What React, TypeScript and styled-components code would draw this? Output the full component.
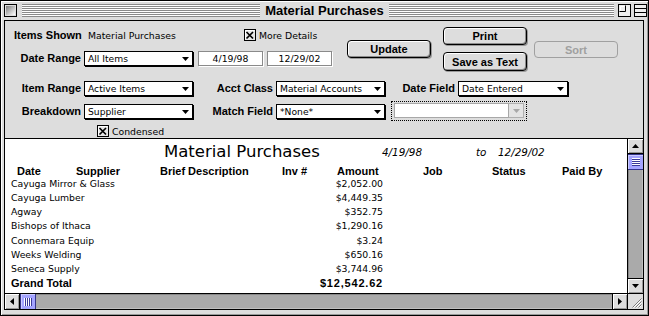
import React from "react";
import styled, { createGlobalStyle } from "styled-components";

const chicago = `"Liberation Sans", Arial, sans-serif`;
const geneva = `"DejaVu Sans", Verdana, sans-serif`;

const GlobalStyle = createGlobalStyle`
  html, body {
    margin: 0;
    padding: 0;
    background: #ffffff;
  }
  body {
    font-family: ${geneva};
    color: #000;
  }
`;

const Window = styled.div`
  box-sizing: border-box;
  width: 649px;
  height: 316px;
  border: 1px solid #000;
  background: #dddddd;
  padding: 0 4px 5px 3px;
  display: flex;
  flex-direction: column;
  box-shadow: inset 1px 1px 0 #ffffff, inset -1px -1px 0 #999999;
`;

const TitleBar = styled.div`
  height: 19px;
  margin: 0 -4px 0 -3px;
  display: grid;
  grid-template-columns: 1fr auto 1fr;
  align-items: center;
  flex-shrink: 0;
`;

const TitleSide = styled.div`
  display: flex;
  align-items: center;
  height: 100%;
`;

const Stripes = styled.div<{ $ml?: number; $mr?: number }>`
  flex: 1;
  height: 13px;
  margin-left: ${p => p.$ml ?? 0}px;
  margin-right: ${p => p.$mr ?? 0}px;
  background: repeating-linear-gradient(
    to bottom,
    #8a8a8a 0px,
    #8a8a8a 1px,
    #ffffff 1px,
    #ffffff 2px
  );
`;

const Title = styled.div`
  padding: 0 5px;
  font: bold 13px ${chicago};
  line-height: 19px;
  white-space: nowrap;
`;

const BoxIcon = styled.svg<{ $ml?: number; $mr?: number }>`
  display: block;
  flex-shrink: 0;
  margin-left: ${p => p.$ml ?? 0}px;
  margin-right: ${p => p.$mr ?? 0}px;
`;

const Inner = styled.div`
  flex: 1;
  min-height: 0;
  border: 1px solid #000;
  display: flex;
  flex-direction: column;
`;

const Panel = styled.div`
  height: 117px;
  box-sizing: border-box;
  padding-top: 6px;
  background: #dddddd;
  display: flex;
  flex-direction: column;
  flex-shrink: 0;
`;

const TopSection = styled.div`
  display: flex;
  align-items: flex-start;
  height: 45px;
`;

const LeftForm = styled.div`
  width: 327px;
  display: flex;
  flex-direction: column;
`;

const Row = styled.div<{ $mt?: number; $h?: number }>`
  display: flex;
  align-items: center;
  height: ${p => p.$h ?? 15}px;
  margin-top: ${p => p.$mt ?? 0}px;
`;

const ItemsLabel = styled.span`
  width: 83px;
  box-sizing: border-box;
  padding-left: 9px;
  font: bold 11px ${chicago};
  white-space: nowrap;
`;

const PlainText = styled.span<{ $w?: number }>`
  width: ${p => (p.$w ? `${p.$w}px` : "auto")};
  font-size: 9.3px;
  font-family: ${geneva};
  white-space: nowrap;
  flex-shrink: 0;
`;

const FieldLabel = styled.span<{ $w: number }>`
  width: ${p => p.$w}px;
  box-sizing: border-box;
  padding-right: 3px;
  text-align: right;
  font: bold 11px ${chicago};
  line-height: 15px;
  white-space: nowrap;
  flex-shrink: 0;
`;

const PopupBox = styled.div<{ $w: number }>`
  width: ${p => p.$w}px;
  height: 15px;
  box-sizing: border-box;
  border: 1px solid #000;
  background: #ffffff;
  box-shadow: 1px 1px 0 #000;
  display: flex;
  align-items: center;
  justify-content: space-between;
  padding: 0 3px 0 3px;
  flex-shrink: 0;
  font-size: 9.2px;
  font-family: ${geneva};
  white-space: nowrap;
`;

const DateField = styled.div<{ $ml: number }>`
  width: 65px;
  height: 15px;
  box-sizing: border-box;
  margin-left: ${p => p.$ml}px;
  border: 1px solid #8a8a8a;
  box-shadow: 1px 1px 0 #ffffff;
  background: #ffffff;
  font-size: 9.3px;
  line-height: 13px;
  text-align: center;
`;

const CheckWrap = styled.label<{ $ml?: number }>`
  display: flex;
  align-items: center;
  gap: 3px;
  margin-left: ${p => p.$ml ?? 0}px;
  font-size: 9.3px;
  font-family: ${geneva};
  white-space: nowrap;
`;

const PushButton = styled.div<{ $ml?: number; $mt?: number; $h?: number; $disabled?: boolean }>`
  width: 84px;
  height: ${p => p.$h ?? 18}px;
  box-sizing: border-box;
  margin-left: ${p => p.$ml ?? 0}px;
  margin-top: ${p => p.$mt ?? 0}px;
  border: 1px solid ${p => (p.$disabled ? "#a0a0a0" : "#000")};
  border-radius: 4px;
  background: #dddddd;
  box-shadow: ${p =>
    p.$disabled ? "none" : "inset 1px 1px 0 #ffffff, inset -1px -1px 0 #8c8c8c, 1px 1px 0 #999"};
  color: ${p => (p.$disabled ? "#a0a0a0" : "#000")};
  font: bold 11px ${chicago};
  display: flex;
  align-items: center;
  justify-content: center;
  flex-shrink: 0;
`;

const ButtonColumn = styled.div`
  display: flex;
  flex-direction: column;
  gap: 7px;
  margin-left: 12px;
`;

const ComboFocus = styled.div`
  margin-left: 6px;
  display: flex;
  padding: 1px 2px 2px 2px;
  border: 1px dotted #000;
  margin-top: -1px;
`;

const ComboField = styled.div`
  width: 115px;
  height: 15px;
  box-sizing: border-box;
  border: 1px solid #a8a8a8;
  background: #ffffff;
`;

const ComboArrow = styled.div`
  width: 15px;
  height: 15px;
  box-sizing: border-box;
  border: 1px solid #b0b0b0;
  border-left: none;
  background: #e4e4e4;
  display: flex;
  align-items: center;
  justify-content: center;
`;

const ReportRow = styled.div`
  flex: 1;
  min-height: 0;
  display: flex;
  border-top: 1px solid #000;
  border-bottom: 1px solid #000;
`;

const Report = styled.div`
  flex: 1;
  background: #ffffff;
  padding-top: 4px;
  overflow: hidden;
  display: flex;
  flex-direction: column;
`;

const ReportTitleRow = styled.div`
  display: flex;
  height: 18px;
  align-items: flex-start;
`;

const ReportTitle = styled.div`
  width: 377px;
  box-sizing: border-box;
  padding-left: 159px;
  font-size: 16.5px;
  font-family: ${geneva};
  line-height: 18px;
  white-space: nowrap;
`;

const ItalicCell = styled.div<{ $w?: number }>`
  width: ${p => (p.$w ? `${p.$w}px` : "auto")};
  padding-top: 2px;
  font-size: 10.4px;
  font-style: italic;
  font-family: ${geneva};
  line-height: 14px;
  white-space: nowrap;
`;

const HeaderRow = styled.div`
  display: grid;
  grid-template-columns: 12px 59px 84px 122px 55px 86px 69px 70px 1fr;
  height: 14px;
  margin-top: 3px;
  font: bold 11px ${chicago};
  line-height: 14px;
  white-space: nowrap;
`;

const DataRow = styled.div<{ $bold?: boolean }>`
  display: flex;
  height: 14.15px;
  line-height: 14px;
  font: ${p => (p.$bold ? `bold 11px ${chicago}` : `9.3px ${geneva}`)};
  white-space: nowrap;
  flex-shrink: 0;
`;

const NameCell = styled.div`
  width: 300px;
  padding-left: 6px;
  box-sizing: border-box;
`;

const AmountCell = styled.div<{ $spaced?: boolean }>`
  width: 78px;
  text-align: right;
  letter-spacing: ${p => (p.$spaced ? "0.8px" : "0")};
`;

const VScroll = styled.div`
  width: 15px;
  border-left: 1px solid #000;
  display: flex;
  flex-direction: column;
  flex-shrink: 0;
`;

const HScrollRow = styled.div`
  height: 15px;
  display: flex;
  flex-shrink: 0;
`;

const HScroll = styled.div`
  flex: 1;
  display: flex;
`;

const ArrowBox = styled.div<{ $edge: "top" | "bottom" | "left" | "right" }>`
  width: 15px;
  height: 15px;
  box-sizing: border-box;
  background: #dddddd;
  border-${p => p.$edge}: 1px solid #000;
  box-shadow: inset 1px 1px 0 #ffffff, inset -1px -1px 0 #999999;
  display: flex;
  align-items: center;
  justify-content: center;
  flex-shrink: 0;
`;

const Track = styled.div<{ $vertical?: boolean }>`
  flex: 1;
  background: #aaaaaa;
  box-shadow: ${p =>
    p.$vertical
      ? "inset 1px 0 0 #888888, inset -1px 0 0 #c0c0c0"
      : "inset 0 1px 0 #888888, inset 0 -1px 0 #c0c0c0"};
`;

const Thumb = styled.div<{ $vertical?: boolean }>`
  box-sizing: border-box;
  width: ${p => (p.$vertical ? "15px" : "16px")};
  height: ${p => (p.$vertical ? "16px" : "15px")};
  background: #a4a4ff;
  border: 1px solid #34348a;
  ${p => (p.$vertical ? "border-left: none; border-right: none;" : "border-top: none; border-bottom: none;")}
  box-shadow: inset 1px 1px 0 #ccccff;
  display: flex;
  align-items: center;
  justify-content: center;
  flex-shrink: 0;
`;

const Ridges = styled.div<{ $vertical?: boolean }>`
  width: 8px;
  height: 8px;
  background: repeating-linear-gradient(
    ${p => (p.$vertical ? "to bottom" : "to right")},
    #ffffff 0px,
    #ffffff 1px,
    #3a3a9a 1px,
    #3a3a9a 2px
  );
`;

const GrowBox = styled.div`
  width: 15px;
  border-left: 1px solid #000;
  background: #dddddd;
  flex-shrink: 0;
`;

const Tri = ({ dir, color = "#000" }: { dir: "up" | "down" | "left" | "right"; color?: string }) => {
  const pts = {
    down: "0,0 7,0 3.5,4",
    up: "0,4 7,4 3.5,0",
    left: "4,0 4,7 0,3.5",
    right: "0,0 0,7 4,3.5",
  }[dir];
  const vertical = dir === "up" || dir === "down";
  return (
    <svg width={vertical ? 7 : 4} height={vertical ? 4 : 7} style={{ display: "block" }}>
      <polygon points={pts} fill={color} />
    </svg>
  );
};

const CheckBox = () => (
  <svg width="12" height="12" style={{ display: "block", flexShrink: 0 }}>
    <rect x="0.5" y="0.5" width="11" height="11" fill="#e6e6e6" stroke="#000" />
    <path d="M1.5 10.5 V1.5 H10.5" stroke="#ffffff" fill="none" />
    <path d="M2.5 3 L9 9.5 M9 3 L2.5 9.5" stroke="#000" strokeWidth="1.7" />
  </svg>
);

const Popup = ({ w, label }: { w: number; label: string }) => (
  <PopupBox $w={w}>
    <span>{label}</span>
    <Tri dir="down" />
  </PopupBox>
);

const rows: [string, string][] = [
  ["Cayuga Mirror & Glass", "$2,052.00"],
  ["Cayuga Lumber", "$4,449.35"],
  ["Agway", "$352.75"],
  ["Bishops of Ithaca", "$1,290.16"],
  ["Connemara Equip", "$3.24"],
  ["Weeks Welding", "$650.16"],
  ["Seneca Supply", "$3,744.96"],
];

const headers = ["", "Date", "Supplier", "Brief Description", "Inv #", "Amount", "Job", "Status", "Paid By"];

export default function App() {
  return (
    <>
      <GlobalStyle />
      <Window>
        <TitleBar>
          <TitleSide>
            <BoxIcon width="13" height="13" $ml={3}>
              <defs>
                <linearGradient id="cb" x1="0" y1="0" x2="1" y2="1">
                  <stop offset="0" stopColor="#7a7a7a" />
                  <stop offset="1" stopColor="#ffffff" />
                </linearGradient>
              </defs>
              <rect x="0.5" y="0.5" width="12" height="12" fill="#dddddd" stroke="#000" />
              <rect x="2" y="2" width="9" height="9" fill="url(#cb)" />
            </BoxIcon>
            <Stripes $ml={5} />
          </TitleSide>
          <Title>Material Purchases</Title>
          <TitleSide>
            <Stripes $mr={4} />
            <BoxIcon width="13" height="13">
              <rect x="0.5" y="0.5" width="12" height="12" fill="#eeeeee" stroke="#000" />
              <path d="M1.5 7.5 H7.5 V1.5" stroke="#000" fill="none" />
              <path d="M2.5 6.5 V2.5 H6.5" stroke="#ffffff" fill="none" />
            </BoxIcon>
            <BoxIcon width="13" height="13" $ml={3} $mr={1}>
              <rect x="0.5" y="0.5" width="12" height="12" fill="#eeeeee" stroke="#000" />
              <path d="M1 4.5 H12 M1 8.5 H12" stroke="#000" />
            </BoxIcon>
          </TitleSide>
        </TitleBar>

        <Inner>
          <Panel>
            <TopSection>
              <LeftForm>
                <Row $h={16}>
                  <ItemsLabel>Items Shown</ItemsLabel>
                  <PlainText $w={156}>Material Purchases</PlainText>
                  <CheckWrap>
                    <CheckBox />
                    More Details
                  </CheckWrap>
                </Row>
                <Row $mt={8}>
                  <FieldLabel $w={79}>Date Range</FieldLabel>
                  <Popup w={109} label="All Items" />
                  <DateField $ml={5}>4/19/98</DateField>
                  <DateField $ml={4}>12/29/02</DateField>
                </Row>
              </LeftForm>
              <PushButton $ml={15} $mt={13}>Update</PushButton>
              <ButtonColumn>
                <PushButton>Print</PushButton>
                <PushButton $h={19}>Save as Text</PushButton>
              </ButtonColumn>
              <PushButton $ml={7} $mt={14} $h={17} $disabled>
                Sort
              </PushButton>
            </TopSection>

            <Row $mt={9}>
              <FieldLabel $w={79}>Item Range</FieldLabel>
              <Popup w={109} label="Active Items" />
              <FieldLabel $w={83}>Acct Class</FieldLabel>
              <Popup w={109} label="Material Accounts" />
              <FieldLabel $w={73}>Date Field</FieldLabel>
              <Popup w={110} label="Date Entered" />
            </Row>

            <Row $mt={8}>
              <FieldLabel $w={79}>Breakdown</FieldLabel>
              <Popup w={109} label="Supplier" />
              <FieldLabel $w={83}>Match Field</FieldLabel>
              <Popup w={109} label="*None*" />
              <ComboFocus>
                <ComboField />
                <ComboArrow>
                  <Tri dir="down" color="#a8a8a8" />
                </ComboArrow>
              </ComboFocus>
            </Row>

            <Row $mt={6} $h={12}>
              <CheckWrap $ml={92}>
                <CheckBox />
                Condensed
              </CheckWrap>
            </Row>
          </Panel>

          <ReportRow>
            <Report>
              <ReportTitleRow>
                <ReportTitle>Material Purchases</ReportTitle>
                <ItalicCell $w={94}>4/19/98</ItalicCell>
                <ItalicCell $w={22}>to</ItalicCell>
                <ItalicCell>12/29/02</ItalicCell>
              </ReportTitleRow>
              <HeaderRow>
                {headers.map((h, i) => (
                  <span key={i}>{h}</span>
                ))}
              </HeaderRow>
              {rows.map(([name, amount]) => (
                <DataRow key={name}>
                  <NameCell>{name}</NameCell>
                  <AmountCell>{amount}</AmountCell>
                </DataRow>
              ))}
              <DataRow $bold>
                <NameCell>Grand Total</NameCell>
                <AmountCell $spaced>$12,542.62</AmountCell>
              </DataRow>
            </Report>
            <VScroll>
              <ArrowBox $edge="bottom">
                <Tri dir="up" />
              </ArrowBox>
              <Thumb $vertical>
                <Ridges $vertical />
              </Thumb>
              <Track $vertical />
              <ArrowBox $edge="top">
                <Tri dir="down" />
              </ArrowBox>
            </VScroll>
          </ReportRow>

          <HScrollRow>
            <HScroll>
              <ArrowBox $edge="right">
                <Tri dir="left" />
              </ArrowBox>
              <Thumb>
                <Ridges />
              </Thumb>
              <Track />
              <ArrowBox $edge="left">
                <Tri dir="right" />
              </ArrowBox>
            </HScroll>
            <GrowBox>
              <svg width="15" height="15" style={{ display: "block" }}>
                <path d="M4.5 13.5 L13.5 4.5 M7.5 13.5 L13.5 7.5 M10.5 13.5 L13.5 10.5" stroke="#7a7a7a" />
                <path d="M5.5 13.5 L13.5 5.5 M8.5 13.5 L13.5 8.5 M11.5 13.5 L13.5 11.5" stroke="#ffffff" />
              </svg>
            </GrowBox>
          </HScrollRow>
        </Inner>
      </Window>
    </>
  );
}
